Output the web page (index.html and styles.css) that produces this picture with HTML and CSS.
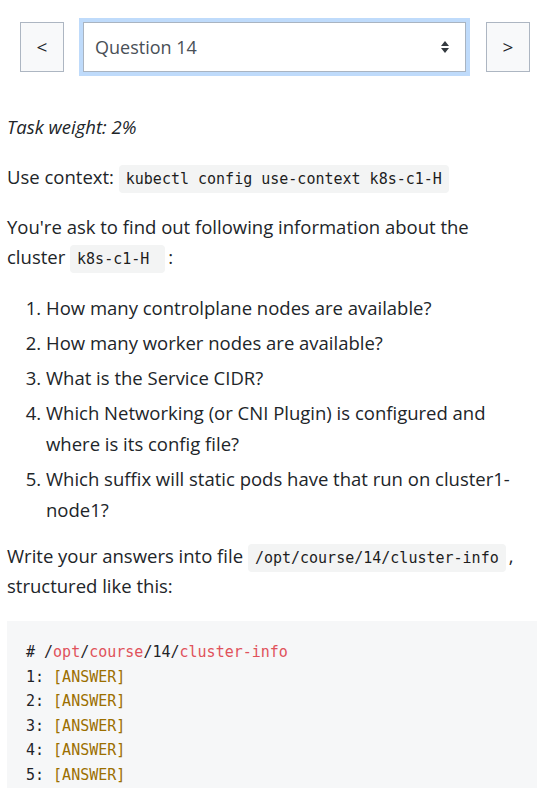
FILE: index.html
```html
<!DOCTYPE html>
<html lang="en">
<head>
<meta charset="utf-8">
<title>Question 14</title>
<link rel="stylesheet" href="styles.css">
</head>
<body>
<div class="nav">
  <button class="nav-btn">&lt;</button>
  <div class="select">
    <span class="select-text">Question 14</span>
    <svg class="select-arrows" width="8" height="12" viewBox="0 0 4 6"><path fill="#343a40" d="M2 0L0 2.5h4zm0 6L0 3.5h4z"/></svg>
  </div>
  <button class="nav-btn">&gt;</button>
</div>
<div class="content">
  <p><em>Task weight: 2%</em></p>
  <p>Use context: <code>kubectl config use-context k8s-c1-H</code></p>
  <p>You're ask to find out following information about the cluster <code>k8s-c1-H </code><span class="tight">:</span></p>
  <ol>
    <li>How many controlplane nodes are available?</li>
    <li>How many worker nodes are available?</li>
    <li>What is the Service CIDR?</li>
    <li>Which Networking (or CNI Plugin) is configured and where is its config file?</li>
    <li>Which suffix will static pods have that run on cluster1-node1?</li>
  </ol>
  <p>Write your answers into file <code>/opt/course/14/cluster-info</code><span class="tight">,</span> structured like this:</p>
  <pre class="block"># /<span class="hl-r">opt</span>/<span class="hl-r">course</span>/14/<span class="hl-r">cluster-info</span>
1: <span class="hl-y">[ANSWER]</span>
2: <span class="hl-y">[ANSWER]</span>
3: <span class="hl-y">[ANSWER]</span>
4: <span class="hl-y">[ANSWER]</span>
5: <span class="hl-y">[ANSWER]</span></pre>
</div>
</body>
</html>
```

FILE: styles.css
```css
html, body {
  margin: 0;
  padding: 0;
  background: #ffffff;
}
body {
  font-family: "Open Sans", "Noto Sans", sans-serif;
  font-size: 18.5px;
  line-height: 30px;
  color: #212529;
  overflow: hidden;
}
.nav {
  display: flex;
  align-items: center;
  padding: 22px 0 0 20px;
}
.nav-btn {
  box-sizing: border-box;
  width: 44px;
  height: 50px;
  border: 1px solid #adb6c2;
  background: #f8f9fa;
  color: #212529;
  font-family: "Open Sans", sans-serif;
  font-size: 19px;
  padding: 0;
}
.select {
  box-sizing: border-box;
  width: 383px;
  height: 50px;
  margin: 0 20px 0 19px;
  border: 1px solid #a9b4c1;
  box-shadow: 0 0 0 4px #bfdbfb;
  background: #fff;
  display: flex;
  align-items: center;
  justify-content: space-between;
  padding: 0 16px 0 11px;
}
.select-text {
  font-size: 18px;
  color: #495057;
}
.select-arrows {
  display: block;
}
.content {
  padding: 40px 0 0 7px;
}
p {
  margin: 0 0 20px 0;
  padding-right: 7px;
}
em {
  font-style: italic;
}
code {
  font-family: "DejaVu Sans Mono", monospace;
  font-size: 15px;
  line-height: 1;
  background: #f3f4f4;
  border-radius: 4px;
  padding: 5px 7px;
  color: #1d1d1d;
}
.tight {
  margin-left: 3px;
}
ol {
  margin: 0 0 16px 0;
  padding: 0 7px 0 39px;
}
li {
  line-height: 31px;
  margin-bottom: 4px;
}
li:last-child {
  margin-bottom: 0;
}
.block {
  margin: 1px 0 0 0;
  background: #f6f7f8;
  padding: 19px 19px;
  font-family: "DejaVu Sans Mono", monospace;
  font-size: 15px;
  line-height: 24.6px;
  color: #1f2328;
}
.hl-r {
  color: #e0525b;
}
.hl-y {
  color: #9c6f00;
}
```
